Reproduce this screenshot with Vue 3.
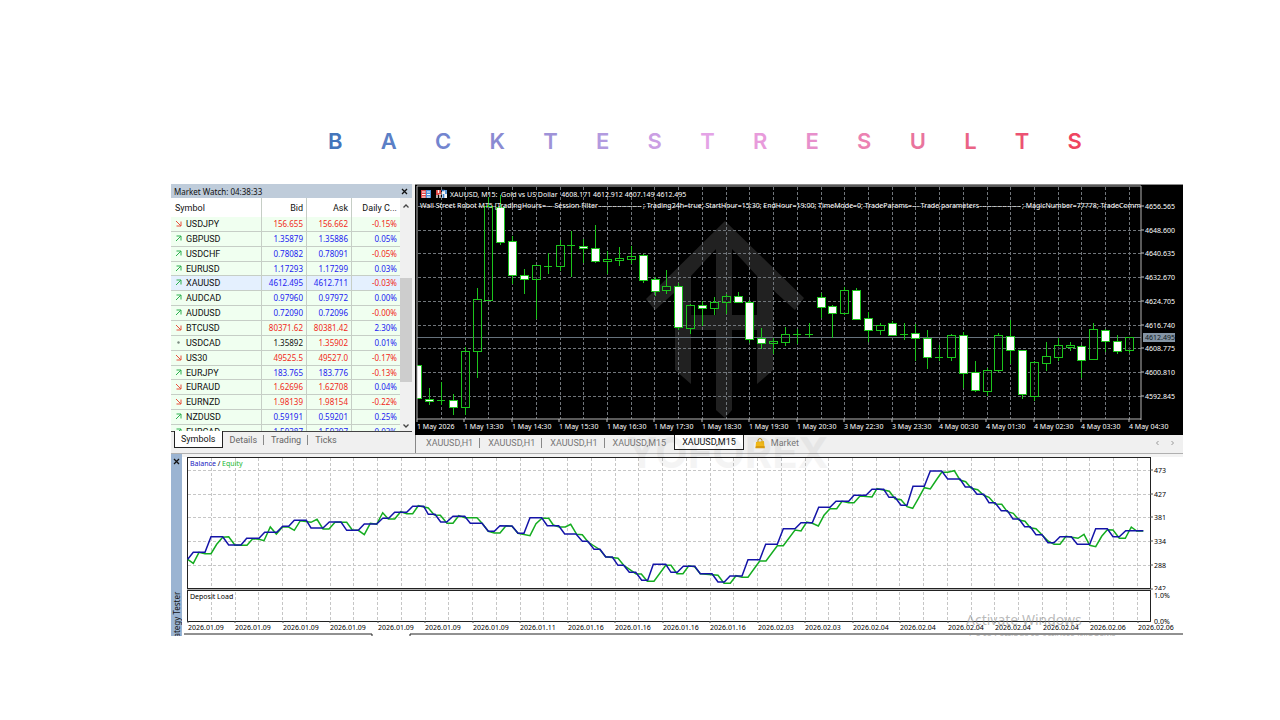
<script setup>
const titleLetters = [
  ['B', '#4475bb'], ['A', '#5b7fc6'], ['C', '#7385cf'], ['K', '#8a8ad2'], ['T', '#9e92d8'],
  ['E', '#b29adf'], ['S', '#cb9fe4'], ['T', '#e4a3e6'], ['R', '#e89bdb'], ['E', '#e78fcb'],
  ['S', '#ec82b2'], ['U', '#e9749d'], ['L', '#ea6385'], ['T', '#ec5272'], ['S', '#ef4560'],
].map(([char, color]) => ({ char, color }))

const quotes = [
  ['USDJPY', 'down', '156.655', '156.662', 'r', 'r', '-0.15%'],
  ['GBPUSD', 'up', '1.35879', '1.35886', 'b', 'b', '0.05%'],
  ['USDCHF', 'up', '0.78082', '0.78091', 'b', 'b', '-0.05%'],
  ['EURUSD', 'up', '1.17293', '1.17299', 'b', 'b', '0.03%'],
  ['XAUUSD', 'up', '4612.495', '4612.711', 'b', 'b', '-0.03%'],
  ['AUDCAD', 'up', '0.97960', '0.97972', 'b', 'b', '0.00%'],
  ['AUDUSD', 'up', '0.72090', '0.72096', 'b', 'b', '-0.00%'],
  ['BTCUSD', 'down', '80371.62', '80381.42', 'r', 'r', '2.30%'],
  ['USDCAD', 'flat', '1.35892', '1.35902', 'k', 'r', '0.01%'],
  ['US30', 'down', '49525.5', '49527.0', 'r', 'r', '-0.17%'],
  ['EURJPY', 'up', '183.765', '183.776', 'b', 'b', '-0.13%'],
  ['EURAUD', 'down', '1.62696', '1.62708', 'r', 'r', '0.04%'],
  ['EURNZD', 'down', '1.98139', '1.98154', 'r', 'r', '-0.22%'],
  ['NZDUSD', 'up', '0.59191', '0.59201', 'b', 'b', '0.25%'],
  ['EURCAD', 'up', '1.59387', '1.59397', 'b', 'b', '0.03%'],
].map(([symbol, dir, bid, ask, bidTone, askTone, change]) => ({
  symbol, dir, bid, ask, bidTone, askTone, change, changeTone: change.startsWith('-') ? 'r' : 'b',
}))

const watchTabs = ['Symbols', 'Details', 'Trading', 'Ticks']
const chartTabs = ['XAUUSD,H1', 'XAUUSD,H1', 'XAUUSD,H1', 'XAUUSD,M15', 'XAUUSD,M15']

const range = (n) => Array.from({ length: n }, (_, i) => i)

const priceGridX = range(30).map((i) => Math.round(441 + i * 23.72))
const priceScale = ['4656.565', '4648.600', '4640.635', '4632.670', '4624.705', '4616.740', '4608.775', '4600.810', '4592.845']
  .map((text, i) => ({ text, y: Math.round(206 + i * 23.71) }))
const timeScale = ['1 May 2026', '1 May 13:30', '1 May 14:30', '1 May 15:30', '1 May 16:30', '1 May 17:30', '1 May 18:30',
  '1 May 19:30', '1 May 20:30', '3 May 22:30', '3 May 23:30', '4 May 00:30', '4 May 01:30', '4 May 02:30', '4 May 03:30', '4 May 04:30']
  .map((text, i) => ({ text, x: Math.round(417 + i * 47.45) }))

/* wick top, body top, body bottom, wick bottom, filled */
const candles = [
  [365, 365, 398, 398, 1], [388, 399, 401, 405, 1], [382, 400, 401, 405, 0], [394, 400, 407, 415, 1],
  [347, 351, 407, 415, 0], [288, 299, 351, 378, 0], [197, 206, 300, 301, 0], [195, 207, 242, 245, 1],
  [236, 241, 275, 284, 1], [269, 275, 279, 294, 1], [265, 265, 279, 319, 0], [253, 266, 267, 274, 0],
  [240, 245, 266, 271, 0], [231, 245, 246, 277, 0], [239, 246, 248, 263, 1], [225, 248, 261, 263, 1],
  [251, 259, 261, 274, 0], [247, 258, 260, 266, 0], [246, 256, 259, 264, 0], [254, 255, 280, 283, 1],
  [277, 279, 291, 296, 1], [270, 286, 290, 294, 0], [283, 286, 327, 330, 1], [304, 305, 328, 334, 0],
  [301, 305, 308, 326, 1], [297, 302, 308, 315, 0], [294, 296, 302, 314, 0], [292, 296, 302, 303, 1],
  [300, 302, 339, 343, 1], [328, 338, 343, 349, 1], [338, 341, 343, 354, 0], [327, 334, 342, 346, 0],
  [329, 334, 335, 344, 0], [323, 334, 335, 338, 0], [293, 297, 307, 318, 1], [305, 306, 313, 338, 1],
  [287, 290, 313, 315, 0], [288, 290, 319, 320, 1], [312, 318, 330, 342, 1], [323, 325, 330, 335, 0],
  [321, 323, 335, 336, 1], [323, 334, 335, 340, 0], [324, 333, 338, 361, 1], [330, 338, 357, 369, 1],
  [345, 357, 358, 361, 0], [334, 335, 357, 361, 0], [332, 335, 373, 388, 1], [361, 372, 390, 392, 1],
  [368, 370, 391, 396, 0], [333, 335, 370, 372, 0], [320, 336, 350, 364, 1], [350, 350, 394, 399, 1],
  [361, 362, 396, 401, 0], [342, 356, 363, 371, 0], [338, 345, 357, 361, 0], [342, 345, 347, 351, 0],
  [345, 346, 360, 378, 1], [323, 329, 359, 360, 0], [329, 330, 341, 352, 1], [335, 341, 351, 354, 1],
  [337, 337, 350, 353, 0],
].map(([high, top, bottom, low, filled], i) => ({
  x: Math.round(417.3 + i * 11.86), high, top, bottom, low, filled, doji: bottom - top < 2,
}))

const testerGridX = range(40).map((i) => Math.round(211 + i * 23.74))
const balanceScale = ['473', '427', '381', '334', '288', '242'].map((text, i) => ({ text, y: Math.round(470 + i * 23.7) }))
const testerDates = [
  ...Array(7).fill('2026.01.09'), '2026.01.11', ...Array(4).fill('2026.01.16'),
  ...Array(2).fill('2026.02.03'), ...Array(5).fill('2026.02.04'), ...Array(2).fill('2026.02.06'),
].map((text, i) => ({ text, x: Math.round(188 + i * 47.48) }))

const balanceLine = '187.7,559.3 193.3,552.3 205,552.3 211,536.7 222.7,536.7 228.7,545 241,545 246.7,538.3 259,538.3 264.7,532.3 276.7,532.3 282.7,526.3 288.7,526.3 294.3,520.3 306.3,520.3 311,528 323,528 329.3,522 341,522 346.7,530.3 358.3,530.3 364.3,524 376.7,524 382.7,518.3 388.7,518.3 394.7,512.3 406.7,512.3 412.7,506.3 423.7,506.3 428.3,514.3 435,514.3 440.7,522 446.7,522 453,516.3 464.7,516.3 470.3,523.3 482,523.3 488.3,531.3 494.3,531.3 500,525.7 512,526 518,533.3 524,533.3 530,517.7 541.7,517.7 547.3,525.7 558.7,525.7 564.7,534 576,534 582.3,541.3 587.7,541.3 594,549.3 600,549.3 605.7,557 612.3,557 618,565.3 623.7,565.3 629.3,572.3 635.7,572.3 641.7,580.3 647.7,580.3 653.3,564.3 665.7,564.3 671,572.3 677.3,572.3 683.3,566.3 694.7,566.3 700.3,573.7 712,573.7 718,582 724.3,582 730,576 742,576 748,559.7 759.7,559.7 765.7,544.3 777.3,544.3 783.3,528.7 795,528.7 801,522.7 812.3,522.7 818.7,507.3 830,507.3 836,501.3 848.7,501.3 854,495.3 866,495.3 872,489.3 883.7,489.3 889,497.3 895,497.3 901,505.3 907,505.3 913,486.3 924.3,486.3 930.3,471 941.7,471 947.7,479 960,479 965.3,487 971.3,487 977,494.3 983.7,494.3 989,502.7 995,502.7 1001.3,510.7 1007.3,510.7 1013,519 1019,519 1024.7,526.7 1030.3,526.7 1036,534.7 1042,534.7 1048,542.7 1054,542.7 1060,536.7 1071.3,536.7 1077.3,544.3 1089.7,544.3 1095.7,528.7 1107.3,528.7 1113,536.7 1119.3,536.7 1125.7,530.7 1143.3,530.7'
const equityLine = '187.7,559.3 193.3,563.3 199,552.3 205,553.7 211,553.7 216.7,544.3 222.7,537.3 228.7,536.7 235,545.3 247,545.3 252.7,538.7 259,539.3 264,540.7 270.3,527 276.3,534 282.7,526.7 288.7,527 294.3,530.3 300.3,520.7 311,522.3 317,519.3 323,529 329,529 335,522.3 346.7,522.3 352.3,530 358.3,530.3 364.3,534.7 370.3,523.3 376.7,524.3 382.7,512.7 388.3,519 394.7,519 400.7,511.7 406.7,513.7 412.7,513.7 418.3,505.7 428.3,508 434.3,515 440.3,515.3 447,523.3 453,523.3 458.7,515.7 465,517.7 477,517.7 482.7,524 488.3,531.3 494.3,533 500,533 506,525.7 512,526.3 518,533.3 530,535.7 536,523.7 542,518.3 548.7,518.3 553.3,525 559.3,527 565.3,527 570.7,524.3 576.7,534.3 582.3,534.7 588.3,542.3 600,549.7 605.7,556.7 618,558.3 623.7,565.3 635.7,573.7 641.3,574 647.3,581.3 654,581.3 665.7,565.3 671,565.3 677,573.7 683,573.7 688.7,565.7 694.7,566.7 700.3,573.7 718,575.3 724,583.3 730.3,583.3 736,575.7 742,577.3 748,577.3 759.7,561 766,561 777.3,545.7 783.3,545.7 795,530 801,531 806.7,522 812.3,523.3 818.3,526 824,515.3 830,508.7 836.7,508.7 842,501.3 848.7,502.7 854,502.7 860,496 872,497 877,488.7 889.3,491.3 895,498.7 901,499.7 907,506.7 912.7,508.3 918.3,498.7 924.3,487.7 930.3,489 936.3,480 941.7,472.3 947.7,472.3 954.3,470.7 960,480 965.7,481.7 971.3,488.3 977.7,489.7 983.7,495.3 989,497.3 995,504 1001.7,504.3 1007.3,511.7 1013.3,513.3 1019,520 1025,521.3 1030.3,527.7 1036,528.7 1048,541 1054,544.3 1060,544.3 1066,536.3 1078,538.3 1084,534.3 1089.7,545.3 1095.7,546.7 1101.7,536.3 1107.3,529.7 1113,530 1119.3,538.3 1125.3,538.3 1131.3,527 1136.7,531 1143.3,531'
</script>

<template>
  <main class="page">
    <h1 class="title" aria-label="Backtest results">
      <span v-for="(l, i) in titleLetters" :key="i" :style="{ color: l.color }">{{ l.char }}</span>
    </h1>

    <div class="terminal">
      <div class="upper">
        <section class="watch">
          <header class="watch-bar">
            <span>Market Watch: 04:38:33</span>
            <button class="icon-btn" type="button" aria-label="Close market watch">
              <svg width="7" height="7" viewBox="0 0 7 7"><path d="M1 1l5 5M6 1l-5 5" stroke="#111" stroke-width="1.3" /></svg>
            </button>
          </header>
          <div class="watch-body">
            <table>
              <colgroup><col /><col class="c-bid" /><col class="c-ask" /><col class="c-chg" /></colgroup>
              <thead>
                <tr><th class="sym">Symbol</th><th>Bid</th><th>Ask</th><th>Daily C...</th></tr>
              </thead>
              <tbody>
                <tr v-for="q in quotes" :key="q.symbol" :class="{ selected: q.symbol === 'XAUUSD' }">
                  <td class="sym">
                    <svg class="dir" width="7" height="7" viewBox="0 0 7 7" fill="none">
                      <path v-if="q.dir === 'up'" d="M1 6l5-5M1.500 1H6v4.500" stroke="#2eb050" />
                      <path v-else-if="q.dir === 'down'" d="M1 1l5 5M6 1.500V6H1.500" stroke="#e8503c" />
                      <circle v-else cx="3.500" cy="3.500" r="1.200" fill="#7a8a80" />
                    </svg>{{ q.symbol }}
                  </td>
                  <td :class="q.bidTone">{{ q.bid }}</td>
                  <td :class="q.askTone">{{ q.ask }}</td>
                  <td :class="q.changeTone">{{ q.change }}</td>
                </tr>
              </tbody>
            </table>
            <div class="scroll">
              <button class="icon-btn" type="button" aria-label="Scroll up">
                <svg width="8" height="6" viewBox="0 0 8 6" fill="none"><path d="M1.500 4.500L4 2l2.500 2.500" stroke="#444" stroke-width="1.3" /></svg>
              </button>
              <div class="track"><div class="thumb"></div></div>
              <button class="icon-btn" type="button" aria-label="Scroll down">
                <svg width="8" height="6" viewBox="0 0 8 6" fill="none"><path d="M1.500 1.500L4 4l2.500-2.500" stroke="#444" stroke-width="1.3" /></svg>
              </button>
            </div>
          </div>
          <nav class="watch-tabs">
            <button v-for="(t, i) in watchTabs" :key="t" type="button" :class="{ active: i === 0 }">{{ t }}</button>
          </nav>
        </section>

        <section class="chart">
          <svg class="plot" viewBox="415 184 768 251" role="img" aria-label="XAUUSD M15 candlestick chart">
            <rect x="415" y="184" width="768" height="251" fill="#000" />
            <path d="M415 184.500H1183" stroke="#8c8c8c" />
            <g fill="#fff" opacity="0.130">
              <path d="M725 221L804 298L795 310L773 290V370L757 384V276L732 249V315H757V330H732V410L725 418L716 410V330H691V315H716V249L691 276V384L675 370V292L655 310L646 299Z" />
            </g>
            <g class="grid-dark">
              <path v-for="x in priceGridX" :key="'v' + x" :d="`M${x} 187V419`" />
              <path v-for="p in priceScale" :key="'h' + p.y" :d="`M418 ${p.y}H1141`" />
            </g>
            <path d="M417 337.500H1141" stroke="#66727c" />
            <g class="candles">
              <g v-for="c in candles" :key="c.x">
                <path v-if="c.doji" :d="`M${c.x} ${c.high}V${c.low}M${c.x - 4} ${c.top}H${c.x + 4}`" />
                <template v-else>
                  <path :d="`M${c.x} ${c.high}V${c.top}M${c.x} ${c.bottom}V${c.low}`" />
                  <rect :x="c.x - 4" :y="c.top" width="8" :height="c.bottom - c.top" :fill="c.filled ? '#fff' : '#000'" :fill-opacity="c.filled ? 1 : 0.300" />
                </template>
              </g>
            </g>
            <rect x="415" y="185" width="2" height="235" fill="#000" />
            <path d="M417 419V186H1141V420M417 419H1141" fill="none" stroke="#b4b4b4" />
            <g stroke="#c4c4c4">
              <path v-for="p in priceScale" :key="'t' + p.y" :d="`M1141 ${p.y}h3`" />
              <path v-for="t in timeScale" :key="'t' + t.x" :d="`M${t.x} 419v3`" />
            </g>
            <g class="chart-text">
              <text v-for="p in priceScale" :key="p.text" x="1145" :y="p.y + 3">{{ p.text }}</text>
              <text v-for="t in timeScale" :key="t.text" :x="t.x" y="429">{{ t.text }}</text>
              <text x="450" y="197">XAUUSD, M15:&nbsp; Gold vs US Dollar&nbsp; 4608.171 4612.912 4607.149 4612.495</text>
              <text x="420" y="208">Wall Street Robot MT5 [TradingHours=--- Session Filter</text>
              <text x="599" y="208">-------------------</text>
              <text x="643" y="208">; Trading24h=true; StartHour=15:30; EndHour=19:00; TimeMode=0; TradeParams=--- Trade parameters</text>
              <text x="980" y="208">------------------</text>
              <svg x="1022" y="198" width="119" height="14" viewBox="1022 198 119 14">
                <text x="1022" y="208">; MagicNumber=77778; TradeCommer</text>
              </svg>
            </g>
            <rect x="1143" y="333" width="32" height="9" fill="#8494a4" />
            <text class="price-tag" x="1145" y="340">4612.495</text>
            <g>
              <rect x="421" y="190" width="5" height="8" fill="#e04848" />
              <rect x="426" y="190" width="5" height="8" fill="#4a90d8" />
              <path d="M422 192h3.500M427 192h3M422 194.500h3.500M427 194.500h3M422 197h3.500M427 197h3" stroke="#fff" />
              <rect x="436" y="190" width="5" height="5" fill="#e04848" />
              <rect x="442" y="190" width="5" height="8" fill="#f4f4f4" />
              <path d="M438.500 190v3M437 195v3M440 194v4" stroke="#f4f4f4" stroke-width="1.400" />
              <path d="M443.500 198v-4M446 190v4M441.500 190.500h3" stroke="#3a80d0" stroke-width="1.600" fill="none" />
            </g>
          </svg>
          <nav class="chart-tabs">
            <button v-for="(t, i) in chartTabs" :key="i" type="button" :class="{ active: i === 4 }">{{ t }}</button>
            <button type="button" class="market">
              <svg width="10" height="11" viewBox="0 0 10 11">
                <path d="M3 4V2.500a2 2 0 0 1 4 0V4" fill="none" stroke="#b98a14" />
                <path d="M1 4l8-1 .500 7H.500z" fill="#f0b818" />
                <path d="M1 8h8.500l.200 2.200H.500z" fill="#d89a10" />
              </svg>
              <span>Market</span>
            </button>
            <span class="pager">
              <button class="icon-btn" type="button" aria-label="Previous tabs">
                <svg width="5" height="6" viewBox="0 0 5 6" fill="none"><path d="M3.500 1L1.500 3l2 2" stroke="#999" /></svg>
              </button>
              <button class="icon-btn" type="button" aria-label="Next tabs">
                <svg width="5" height="6" viewBox="0 0 5 6" fill="none"><path d="M1.500 1l2 2-2 2" stroke="#999" /></svg>
              </button>
            </span>
          </nav>
        </section>
      </div>

      <section class="tester">
        <aside class="side">
          <button class="icon-btn" type="button" aria-label="Close tester">
            <svg width="7" height="7" viewBox="0 0 7 7"><path d="M1 1l5 5M6 1l-5 5" stroke="#111" stroke-width="1.3" /></svg>
          </button>
          <span class="side-label">Strategy Tester</span>
        </aside>
        <svg class="plot" viewBox="182 454 1001 182" role="img" aria-label="Balance and equity graph">
          <rect x="182" y="454" width="1001" height="182" fill="#fff" />
          <rect x="182" y="454" width="1001" height="3" fill="#f3f3f3" />
          <g class="grid-light">
            <path v-for="x in testerGridX" :key="'v' + x" :d="`M${x} 458V588M${x} 592V621`" />
            <path v-for="b in balanceScale.slice(0, 5)" :key="'h' + b.y" :d="`M188 ${b.y}H1150`" />
          </g>
          <path d="M187 589.500H1151" stroke="#b4b4b4" stroke-width="2" />
          <g class="frame">
            <rect x="187.500" y="457.500" width="963" height="131" />
            <rect x="187.500" y="590.500" width="963" height="31" />
            <path d="M184 634H372V636M410 636V634H1183" />
          </g>
          <g stroke="#555">
            <path v-for="b in balanceScale" :key="'t' + b.y" :d="`M1150 ${b.y}h3`" />
            <path v-for="d in testerDates" :key="'t' + d.x" :d="`M${d.x} 621v2`" />
          </g>
          <polyline :points="equityLine" fill="none" stroke="#14ac20" stroke-width="1.500" />
          <polyline :points="balanceLine" fill="none" stroke="#1414a8" stroke-width="1.500" />
          <g class="tester-text">
            <text x="190" y="466"><tspan fill="#2020c0">Balance</tspan> / <tspan fill="#20b830">Equity</tspan></text>
            <text x="190" y="599">Deposit Load</text>
            <text v-for="b in balanceScale.slice(0, 5)" :key="b.text" x="1154" :y="b.y + 3">{{ b.text }}</text>
            <svg x="1150" y="580" width="33" height="10" viewBox="1150 580 33 10"><text x="1154" y="591">242</text></svg>
            <text x="1154" y="598">1.0%</text>
            <text x="1154" y="624">0.0%</text>
            <text v-for="d in testerDates" :key="d.x" :x="d.x" y="630">{{ d.text }}</text>
          </g>
          <g class="activate">
            <text x="966" y="625" font-size="14">Activate Windows</text>
            <text x="969" y="640" font-size="9">Go to Settings to activate Windows.</text>
          </g>
        </svg>
      </section>
      <div class="brand" aria-hidden="true">YOFOREX</div>
    </div>
  </main>
</template>

<style>
body { background: #fff; }
</style>

<style scoped>
.page {
  box-sizing: border-box;
  padding: 128px 97px 84px 171px;
  font-family: Roboto, "Noto Sans", sans-serif;
  font-size: 9px;
  color: #111;
}
.title {
  display: flex;
  justify-content: space-between;
  margin: 0 101px 30px 157px;
  font: 600 22px/26px Inter, sans-serif;
}
.terminal { position: relative; overflow: hidden; }
.upper {
  display: grid;
  grid-template-columns: 241px 1fr;
  column-gap: 3px;
  background: #f0f0f0;
  border-bottom: 1px solid #b0b0b0;
}
button { margin: 0; padding: 0; border: 0; background: none; font: inherit; color: inherit; }
.icon-btn { display: flex; align-items: center; justify-content: center; }
.plot { display: block; width: 100%; height: auto; font-family: "Noto Sans", sans-serif; }

.watch { display: flex; flex-direction: column; min-height: 0; }
.watch-bar {
  display: flex;
  align-items: center;
  justify-content: space-between;
  height: 14px;
  padding: 0 4px 0 3px;
  background: #bfccda;
  font-family: "Noto Sans", sans-serif;
  font-size: 8px;
}
.watch-body { display: flex; flex: 1 1 0; min-height: 0; overflow: hidden; background: #fff; border-bottom: 1px solid #444; }
table { flex: 1; height: 242px; table-layout: fixed; border-collapse: separate; border-spacing: 0; }
.c-bid, .c-ask { width: 45px; }
.c-chg { width: 49px; }
th, td { padding: 0 3px 0 0; text-align: right; font-weight: 400; line-height: 12px; white-space: nowrap; border-left: 1px solid #c6cec6; }
th { height: 19px; background: #fff; }
td { background: #f0fff0; border-bottom: 1px solid #c6cec6; font-family: "Noto Sans", sans-serif; font-size: 8px; }
.sym { padding-left: 4px; text-align: left; border-left: 0; }
td.sym { font-family: Roboto, "Noto Sans", sans-serif; font-size: 9px; }
.selected td { background: #e4f0fe; }
.dir { margin-right: 4px; }
.r { color: #f02a20; }
.b { color: #1c1cf0; }
.k { color: #111; }
.scroll { display: flex; flex-direction: column; width: 12px; background: #f0f0f0; }
.scroll .icon-btn { height: 15px; }
.scroll .icon-btn:last-child { height: 10px; }
.track { flex: 1; display: flex; flex-direction: column; }
.thumb { margin-top: 65px; height: 104px; background: #cdcdcd; }
.watch-tabs { display: flex; align-items: flex-start; height: 21px; padding-left: 3px; }
.watch-tabs button { position: relative; padding: 0 7px; line-height: 16px; color: #666; }
.watch-tabs button.active { margin-top: -1px; padding: 0 6px; background: #fff; border: 1px solid #222; border-top: 0; color: #111; }
.watch-tabs button + button:not(:last-child)::after,
.chart-tabs > button:nth-child(-n + 3)::after {
  content: "";
  position: absolute;
  right: 0;
  top: 3px;
  height: 10px;
  border-right: 1px solid #888;
}

.grid-dark { stroke: #70757a; stroke-dasharray: 3 2; shape-rendering: crispEdges; }
.candles { stroke: #1cc41c; shape-rendering: crispEdges; }
.chart-text { fill: #fff; font-size: 7px; }
.price-tag { fill: #101820; font-size: 7px; }
.chart-tabs { display: flex; align-items: flex-start; gap: 1px; height: 18px; padding-left: 3px; border-left: 1px solid #888; }
.chart-tabs > button { position: relative; padding: 0 7px; line-height: 16px; color: #777; }
.chart-tabs > .active { padding: 0 7px; line-height: 14px; background: #fff; border: 1px solid #222; border-top-width: 0; color: #111; }
.chart-tabs > .market { display: flex; align-items: center; gap: 6px; padding: 0 10px; }
.pager { display: flex; gap: 10px; margin-left: auto; padding-right: 8px; }
.pager .icon-btn { height: 15px; }

.tester { display: grid; grid-template-columns: 11px 1fr; background: #fff; }
.side { display: flex; flex-direction: column; align-items: center; justify-content: space-between; min-height: 0; background: #9bb4d2; overflow: hidden; }
.side .icon-btn { flex: none; height: 15px; }
.side-label { flex: none; height: 44px; font-family: "Noto Sans", sans-serif; font-size: 8px; line-height: 11px; writing-mode: vertical-rl; transform: rotate(180deg); white-space: nowrap; direction: rtl; }
.grid-light { stroke: #c6c6c6; stroke-dasharray: 3 2; shape-rendering: crispEdges; }
.frame { fill: none; stroke: #222; }
.tester-text { fill: #000; font-size: 7px; }
.activate { fill: #8c8c8c; fill-opacity: 0.6; }
.brand {
  position: absolute;
  top: 244px;
  left: 45%;
  font: 700 42px/50px Inter, sans-serif;
  color: #000;
  opacity: 0.04;
  pointer-events: none;
}
</style>
